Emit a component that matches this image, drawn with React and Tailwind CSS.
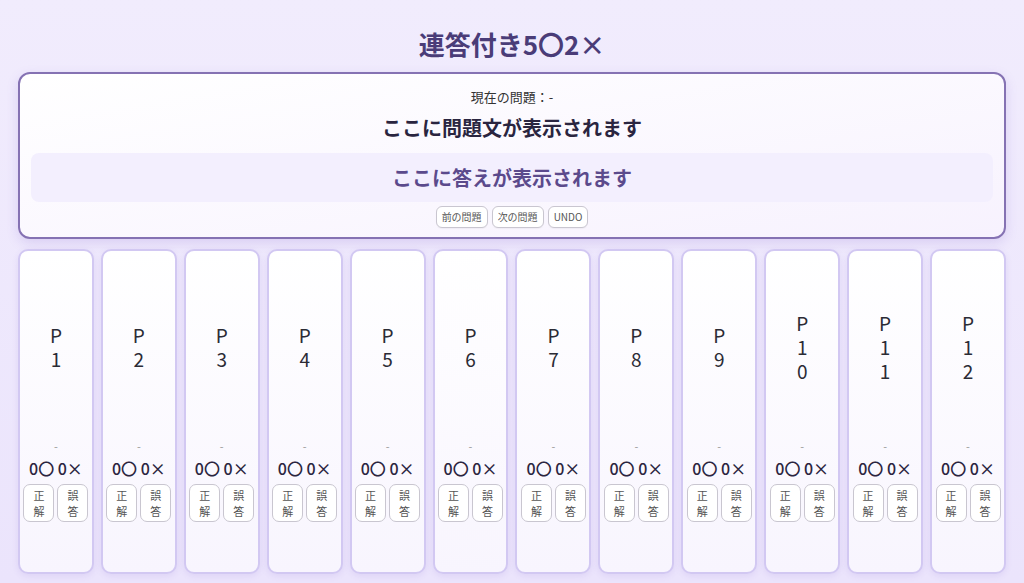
import React from 'react'

const font = { fontFamily: '"Noto Sans CJK JP", "Noto Sans", sans-serif' }

const players = Array.from({ length: 12 }, (_, i) => `P${i + 1}`)

function SmallButton({ children }) {
  return (
    <button className="h-[22px] px-[5px] rounded-[6px] border border-[#c9c6d0] bg-white text-[10px] leading-none text-[#555] shadow-[0_1px_1px_rgba(0,0,0,0.04)]">
      {children}
    </button>
  )
}

function JudgeButton({ label }) {
  return (
    <button className="w-[31px] h-[38px] rounded-[7px] border border-[#c9c6d0] bg-white flex flex-col items-center justify-center text-[11px] leading-[16px] text-[#555]">
      {label.split('').map((c, i) => (
        <span key={i} className="block">{c}</span>
      ))}
    </button>
  )
}

function PlayerCard({ name }) {
  return (
    <div className="h-[325px] rounded-[10px] border-2 border-[#d2c8f2] bg-gradient-to-b from-white to-[#f8f5fe] shadow-[0_2px_6px_rgba(120,90,200,0.12)] flex flex-col items-center pb-[50px]">
      <div className="flex-1 flex flex-col items-center justify-center text-[19px] leading-[24px] text-[#2b2b35] pt-[4px]">
        {name.split('').map((c, i) => (
          <span key={i} className="block">{c}</span>
        ))}
      </div>
      <div className="text-[11px] leading-[14px] text-[#999]">-</div>
      <div className="mt-[5px] text-[16px] leading-[20px] font-medium text-[#2b2540]">0〇 0×</div>
      <div className="mt-[6px] flex gap-[3px]">
        <JudgeButton label="正解" />
        <JudgeButton label="誤答" />
      </div>
    </div>
  )
}

export default function App() {
  return (
    <div style={font} className="min-h-[583px] w-full bg-gradient-to-b from-[#f1ecfd] to-[#ebe4fc] px-[18px] pt-[26px]">
      <h1 className="text-center text-[26px] leading-[36px] font-bold text-[#4a3c78] mb-[10px]">
        連答付き5〇2×
      </h1>

      <div className="rounded-[12px] border-2 border-[#8572b3] bg-gradient-to-br from-white to-[#f7f2fe] shadow-[0_4px_12px_rgba(120,90,200,0.18)] px-[11px] pt-[13px] pb-[9px] flex flex-col items-center">
        <div className="text-[13px] leading-[20px] text-[#333]">現在の問題：-</div>
        <div className="mt-[6px] text-[20px] leading-[30px] font-bold text-[#2a2540]">
          ここに問題文が表示されます
        </div>
        <div className="mt-[10px] w-full h-[49px] rounded-[8px] bg-[#f3effe] flex items-center justify-center text-[20px] font-bold text-[#5b4a8c]">
          ここに答えが表示されます
        </div>
        <div className="mt-[4px] flex gap-[4px]">
          <SmallButton>前の問題</SmallButton>
          <SmallButton>次の問題</SmallButton>
          <SmallButton>UNDO</SmallButton>
        </div>
      </div>

      <div className="mt-[10px] grid grid-cols-12 gap-[7px]">
        {players.map((p) => (
          <PlayerCard key={p} name={p} />
        ))}
      </div>
    </div>
  )
}
